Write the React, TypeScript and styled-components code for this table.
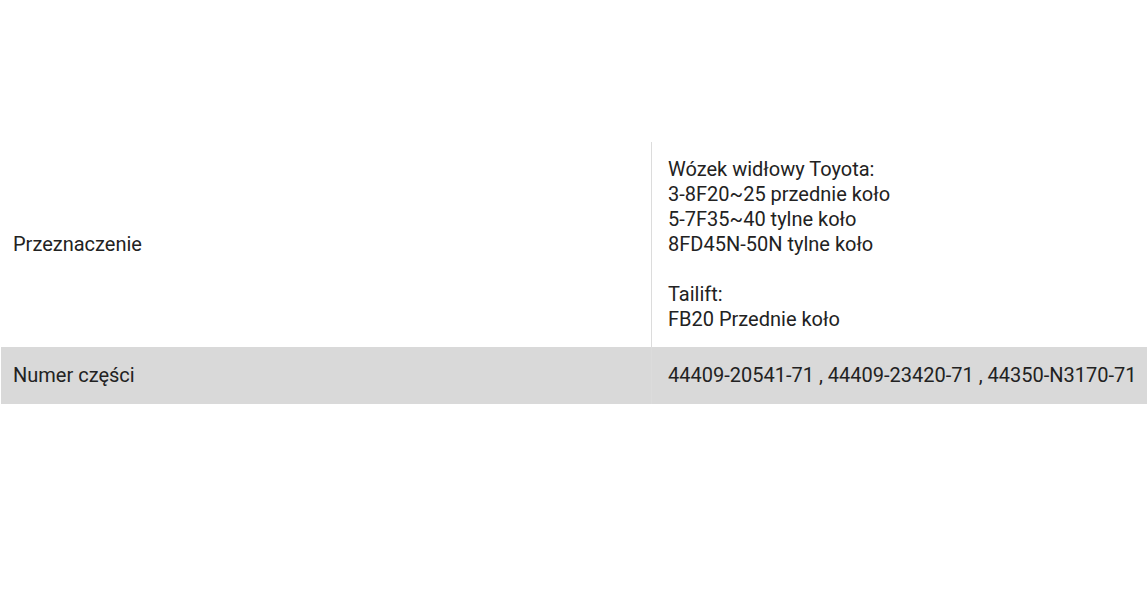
import React from "react";
import styled, { createGlobalStyle } from "styled-components";

const GlobalStyle = createGlobalStyle`
  html, body {
    margin: 0;
    padding: 0;
    background: #ffffff;
  }
  body {
    font-family: Roboto, "Liberation Sans", Arial, sans-serif;
    color: #222222;
  }
`;

const Page = styled.div`
  padding: 142px 0 0 1px;
`;

const Table = styled.table`
  width: 100%;
  border-collapse: separate;
  border-spacing: 0;
  table-layout: fixed;
  font-size: 20px;
  line-height: 25px;
`;

const LabelCol = styled.col`
  width: 651px;
`;

const Row = styled.tr<{ $shaded?: boolean }>`
  background: ${(p) => (p.$shaded ? "#d9d9d9" : "transparent")};
`;

const LabelCell = styled.td<{ $pad: number }>`
  padding: ${(p) => p.$pad}px 12px;
  vertical-align: middle;
  border-right: 1px solid #dcdcdc;
`;

const ValueCell = styled.td<{ $pad: number }>`
  padding: ${(p) => p.$pad}px 4px ${(p) => p.$pad}px 16px;
  vertical-align: middle;
  white-space: pre;
`;

interface Spec {
  label: string;
  value: string;
  shaded?: boolean;
  pad: number;
}

const specs: Spec[] = [
  {
    label: "Przeznaczenie",
    value:
      "Wózek widłowy Toyota:\n3-8F20~25 przednie koło\n5-7F35~40 tylne koło\n8FD45N-50N tylne koło\n\nTailift:\nFB20 Przednie koło",
    pad: 15,
  },
  {
    label: "Numer części",
    value: "44409-20541-71 , 44409-23420-71 , 44350-N3170-71",
    shaded: true,
    pad: 16,
  },
];

export default function App() {
  return (
    <Page>
      <GlobalStyle />
      <Table>
        <colgroup>
          <LabelCol />
          <col />
        </colgroup>
        <tbody>
          {specs.map((s) => (
            <Row key={s.label} $shaded={s.shaded}>
              <LabelCell $pad={s.pad}>{s.label}</LabelCell>
              <ValueCell $pad={s.pad}>{s.value}</ValueCell>
            </Row>
          ))}
        </tbody>
      </Table>
    </Page>
  );
}
